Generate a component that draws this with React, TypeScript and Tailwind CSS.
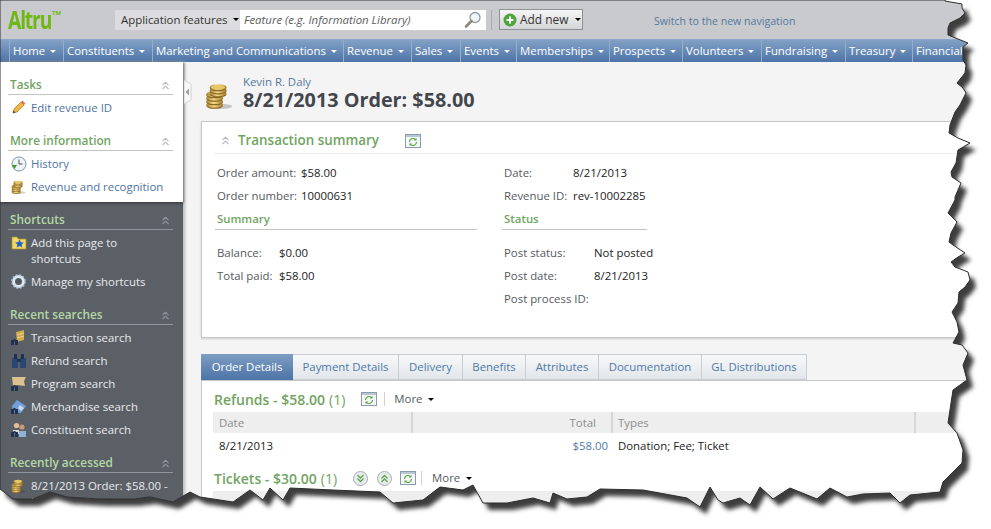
import { ChevronsUp } from "lucide-react";
import type { ReactNode } from "react";

const rightEdge =
  "945,1 962,4 962,8 965,13 960,18 950,23 948,28 948,35 968,43 963,47 963,60 966,65 965,73 957,83 963,88 966,93 960,105 955,112 950,125 949,133 958,138 970,143 958,150 956,163 951,172 952,177 961,183 955,197 955,200 948,213 957,222 951,233 949,242 953,245 965,253 958,257 951,262 955,267 968,272 970,280 965,287 959,292 958,303 952,312 957,322 959,332 953,343 962,345 968,353 963,365 967,380 953,390 948,423 957,433 963,450 962,463 943,482 940,492 910,495 900,503 890,493 863,494 847,497 830,488 817,499 790,488 773,499 760,487 750,505 740,498 723,503 718,500 710,487 700,507 687,498 665,494 643,490 600,489 587,497 567,499 553,493 550,503 533,498 507,503 483,503 473,485 463,490 440,487 423,500 393,503 380,492 333,490 290,488 283,500 270,488 263,500 250,490 233,502 200,497 190,492 173,502 150,497 133,499 100,499 67,497 50,492 33,499 13,499 0,489";

const tornPath = `M0 0 L945 0 L${rightEdge.split(" ").join(" L").replace(/,/g, " ")} Z`;

const navItems = [
  { label: "Home", w: "w-[54px]" },
  { label: "Constituents", w: "w-[89px]" },
  { label: "Marketing and Communications", w: "w-[191px]" },
  { label: "Revenue", w: "w-[68px]" },
  { label: "Sales", w: "w-[49px]" },
  { label: "Events", w: "w-[56px]" },
  { label: "Memberships", w: "w-[93px]" },
  { label: "Prospects", w: "w-[73px]" },
  { label: "Volunteers", w: "w-[79px]" },
  { label: "Fundraising", w: "w-[84px]" },
  { label: "Treasury", w: "w-[67px]" },
];

const tabs = [
  { label: "Payment Details", w: "w-[106px]" },
  { label: "Delivery", w: "w-[64px]" },
  { label: "Benefits", w: "w-[63px]" },
  { label: "Attributes", w: "w-[73px]" },
  { label: "Documentation", w: "w-[103px]" },
  { label: "GL Distributions", w: "w-[105px]" },
];

const stack = [
  { cx: 11, y: 27 },
  { cx: 11, y: 23 },
  { cx: 11, y: 19 },
  { cx: 11, y: 15 },
  { cx: 15, y: 14 },
  { cx: 15, y: 10.5 },
  { cx: 15, y: 7 },
];

const Coins = ({ size = 15 }: { size?: number }) => (
  <svg width={size} height={size} viewBox="0 0 32 32" className="shrink-0">
    <defs>
      <linearGradient id="gold" x1="0" x2="1" y1="0" y2="0">
        <stop offset="0" stopColor="#a9802c" />
        <stop offset=".45" stopColor="#f2dc8e" />
        <stop offset="1" stopColor="#a87c28" />
      </linearGradient>
    </defs>
    <ellipse cx="17" cy="29" rx="14" ry="3" fill="#00000030" />
    {stack.map((coin) => (
      <g key={`${coin.cx}-${coin.y}`}>
        <ellipse cx={coin.cx} cy={coin.y + 1.4} rx="9.5" ry="3.4" fill="#8f6a22" />
        <ellipse cx={coin.cx} cy={coin.y} rx="9.5" ry="3.4" fill="url(#gold)" />
      </g>
    ))}
    <ellipse cx="15" cy="7" rx="8" ry="2.6" fill="#e7c765" />
  </svg>
);

const Pencil = () => (
  <svg width="14" height="14" viewBox="0 0 14 14" className="shrink-0">
    <path d="M1 13l1-4 7-7 3 3-7 7z" fill="#f0b840" stroke="#a87420" strokeWidth=".7" />
    <path d="M9 2l1.4-1.4 3 3L12 5z" fill="#e0705a" />
    <path d="M1 13l.6-2.4 1.8 1.8z" fill="#444" />
  </svg>
);

const HistoryIcon = () => (
  <svg width="16" height="16" viewBox="0 0 16 16" className="shrink-0">
    <circle cx="8" cy="8" r="7" fill="#eef3f6" stroke="#7f98a8" />
    <path d="M8 3.5V8h3.5" fill="none" stroke="#555" strokeWidth="1" />
    <path d="M1 9h5l-2.5 4z" fill="#3e9a2c" />
  </svg>
);

const FolderStar = () => (
  <svg width="16" height="15" viewBox="0 0 16 15" className="shrink-0">
    <path d="M1 2h5l1.5 2H15v10H1z" fill="#f2d667" stroke="#a9902f" strokeWidth=".7" />
    <path d="M8.5 4.5l1.3 2.8 3 .3-2.2 2 .7 3-2.8-1.6-2.8 1.6.7-3-2.2-2 3-.3z" fill="#1f63c4" />
  </svg>
);

const Gear = () => (
  <svg width="15" height="15" viewBox="0 0 15 15" className="shrink-0">
    <circle cx="7.5" cy="7.5" r="5" fill="none" stroke="#dde6ee" strokeWidth="3" />
    <circle cx="7.5" cy="7.5" r="6.6" fill="none" stroke="#a8c0d6" strokeWidth="1.6" strokeDasharray="2 1.5" />
    <circle cx="7.5" cy="7.5" r="2.4" fill="#4f5660" />
  </svg>
);

const Binoculars = () => (
  <g>
    <rect x="0" y="10" width="3" height="5" fill="#22334f" />
    <rect x="4" y="10" width="3" height="5" fill="#22334f" />
    <rect x="2.5" y="9" width="2" height="2.5" fill="#22334f" />
  </g>
);

const SearchCoin = () => (
  <svg width="15" height="16" viewBox="0 0 15 16" className="shrink-0">
    <path d="M5 2l8-2v10l-7 2z" fill="#cfa84f" />
    <path d="M6 5l7-2M6 8l7-2" stroke="#f2df9c" strokeWidth=".8" />
    <Binoculars />
  </svg>
);

const RefundBinoculars = () => (
  <svg width="16" height="15" viewBox="0 0 16 15" className="shrink-0">
    <rect x="1" y="5" width="6" height="10" rx="1" fill="#2a4672" />
    <rect x="9" y="5" width="6" height="10" rx="1" fill="#2a4672" />
    <rect x="3" y="1" width="3" height="5" fill="#1d3153" />
    <rect x="10" y="1" width="3" height="5" fill="#1d3153" />
    <rect x="6" y="6" width="4" height="3" fill="#1d3153" />
  </svg>
);

const SearchTicket = () => (
  <svg width="16" height="16" viewBox="0 0 16 16" className="shrink-0">
    <path d="M1 1h14l-2 4 1 5-8-1-4 1z" fill="#dcc08e" />
    <Binoculars />
  </svg>
);

const SearchTag = () => (
  <svg width="16" height="16" viewBox="0 0 16 16" className="shrink-0">
    <path d="M6 1l9 6-5 7-8-1-1-6z" fill="#6f9fdc" />
    <path d="M9 6l4 3-3 3-3-3z" fill="#cfd6de" />
    <Binoculars />
  </svg>
);

const SearchPeople = () => (
  <svg width="16" height="16" viewBox="0 0 16 16" className="shrink-0">
    <circle cx="5.5" cy="3.5" r="2.6" fill="#e3bf98" />
    <circle cx="11" cy="5" r="2.6" fill="#c99a74" />
    <path d="M2 8h6v4H2z" fill="#d9d4cc" />
    <path d="M8 9h7v6H8z" fill="#8fb1d6" />
    <Binoculars />
  </svg>
);

const RefreshBox = () => (
  <svg width="16" height="14" viewBox="0 0 16 14" className="shrink-0">
    <rect x=".5" y=".5" width="15" height="13" fill="#f6f8f9" stroke="#8a9bb0" />
    <rect x="1" y="1" width="14" height="2" fill="#b9c6d4" />
    <path d="M4.5 8a3.5 3.5 0 0 1 6-2.4M11.5 8a3.5 3.5 0 0 1-6 2.4" fill="none" stroke="#55a83c" strokeWidth="1.2" />
    <path d="M11.5 3.8v2.7H8.8zM4.5 12.2V9.5h2.7z" fill="#55a83c" />
  </svg>
);

const RoundChevrons = ({ up }: { up?: boolean }) => (
  <svg width="15" height="15" viewBox="0 0 15 15" className="shrink-0">
    <circle cx="7.5" cy="7.5" r="7" fill="#e8ecef" stroke="#a5adb5" />
    <path
      d={up ? "M4.5 7.5l3-3 3 3M4.5 11l3-3 3 3" : "M4.5 4l3 3 3-3M4.5 7.5l3 3 3-3"}
      fill="none"
      stroke="#5da544"
      strokeWidth="1.3"
    />
  </svg>
);

const Caret = ({ className }: { className: string }) => (
  <span className={`inline-block w-0 h-0 border-x-[3px] border-x-transparent border-t-[3px] ${className}`} />
);

const SideHeading = ({ title, dark, className }: { title: string; dark?: boolean; className?: string }) => (
  <div className={`flex items-center justify-between h-[19px] ml-2 mr-[10px] pl-0.5 border-b ${dark ? "border-[#8c949c]" : "border-[#c4c4c4]"} ${className ?? ""}`}>
    <span className={`text-[11.8px] font-semibold leading-none ${dark ? "text-[#b4d8a4]" : "text-[#6fa45f]"}`}>{title}</span>
    <ChevronsUp size={13} className={`mr-px ${dark ? "text-[#8c959d]" : "text-[#bcbcbc]"}`} />
  </div>
);

const SideLink = ({ icon, dark, children }: { icon: ReactNode; dark?: boolean; children: ReactNode }) => (
  <div className={`flex gap-[5px] pl-[11px] pr-1 py-[3.5px] leading-4 ${dark ? "text-[#e8eaec]" : "text-[#4e73a0]"}`}>
    <span className="w-[15px] h-4 flex justify-center">{icon}</span>
    <span>{children}</span>
  </div>
);

const Field = ({ label, value, w }: { label: string; value?: string; w: string }) => (
  <div className="flex h-[23px] items-center">
    <span className={`${w} text-[#555a60]`}>{label}</span>
    <span className="text-[#222]">{value}</span>
  </div>
);

export default function App() {
  return (
    <div
      className="relative w-[991px] h-[529px] overflow-hidden bg-[#f4f4f4] text-[11.4px]"
      style={{ fontFamily: '"Open Sans", sans-serif' }}
    >
      {/* Top bar */}
      <header className="flex items-center h-[39px] bg-[#c9cacd] pl-2">
        <div className="w-[107px] flex items-start text-[#6fb712]">
          <span className="text-[25px] font-bold leading-none tracking-[-1.5px] scale-x-[.77] origin-left">Altru</span>
          <span className="text-[6px] font-bold -ml-[12px] mt-0.5">TM</span>
        </div>
        <div className="flex items-center h-5 w-[125px] bg-[#dcdcde] pl-[6px] gap-[5px] text-[#333] whitespace-nowrap">
          <span>Application features</span>
          <Caret className="border-t-black" />
        </div>
        <div className="flex items-center justify-between h-5 w-[246px] bg-white pl-1 pr-1 italic text-[#5c5c5c]">
          <span>Feature (e.g. Information Library)</span>
          <svg width="18" height="18" viewBox="0 0 18 18">
            <circle cx="11" cy="6.5" r="5" fill="#f2f6f9" stroke="#8d9aa3" strokeWidth="1.3" />
            <path d="M7.5 10L2 15.5" stroke="#8e8678" strokeWidth="2.6" strokeLinecap="round" />
          </svg>
        </div>
        <div className="w-px h-5 bg-[#a9abae] ml-[5px] mr-[7px]" />
        <button className="flex items-center h-[21px] w-[84px] border border-[#8f9194] bg-gradient-to-b from-[#f6f6f6] to-[#d4d5d7] pl-[3px] gap-[3px] text-[#333] text-[11.9px]">
          <svg width="14" height="14" viewBox="0 0 14 14">
            <circle cx="7" cy="7" r="6.5" fill="#4fa33b" />
            <path d="M7 3.5v7M3.5 7h7" stroke="#fff" strokeWidth="2" />
          </svg>
          <span>Add new</span>
          <Caret className="border-t-black ml-1" />
        </button>
        <span className="ml-[71px] pt-1 text-[#55799f] text-[10.6px]">Switch to the new navigation</span>
      </header>

      {/* Nav */}
      <nav className="flex items-center h-[23px] pl-[9px] bg-gradient-to-b from-[#83a1c5] to-[#4d74a7] border-t border-[#8aa6c8] text-white whitespace-nowrap">
        {navItems.map((item) => (
          <div key={item.label} className={`${item.w} h-full flex items-center gap-[5px] pl-[3px] border-l border-[#94aecb]`}>
            <span>{item.label}</span>
            <Caret className="border-t-white" />
          </div>
        ))}
        <div className="h-full flex items-center pl-[3px] border-l border-[#94aecb]">Financial</div>
      </nav>

      <div className="flex h-[467px]">
        {/* Sidebar */}
        <aside className="w-[183px] shrink-0 flex flex-col bg-[#5b6067] shadow-[2px_0_3px_#bbb]">
          <div className="bg-white h-[140px] pt-[14px] shadow-[0_1px_3px_#333]">
            <SideHeading title="Tasks" />
            <div className="pt-px">
              <SideLink icon={<Pencil />}>Edit revenue ID</SideLink>
            </div>
            <SideHeading title="More information" className="mt-[13px]" />
            <div className="pt-px">
              <SideLink icon={<HistoryIcon />}>History</SideLink>
              <SideLink icon={<Coins />}>Revenue and recognition</SideLink>
            </div>
          </div>
          <div className="pt-[9px]">
            <SideHeading title="Shortcuts" dark />
            <div className="pt-px">
              <SideLink dark icon={<FolderStar />}>Add this page to<br />shortcuts</SideLink>
              <SideLink dark icon={<Gear />}>Manage my shortcuts</SideLink>
            </div>
            <SideHeading title="Recent searches" dark className="mt-[13px]" />
            <div className="pt-px">
              <SideLink dark icon={<SearchCoin />}>Transaction search</SideLink>
              <SideLink dark icon={<RefundBinoculars />}>Refund search</SideLink>
              <SideLink dark icon={<SearchTicket />}>Program search</SideLink>
              <SideLink dark icon={<SearchTag />}>Merchandise search</SideLink>
              <SideLink dark icon={<SearchPeople />}>Constituent search</SideLink>
            </div>
            <SideHeading title="Recently accessed" dark className="mt-[13px]" />
            <div className="pt-px">
              <SideLink dark icon={<Coins />}>8/21/2013 Order: $58.00 - Kevin R. Daly</SideLink>
            </div>
          </div>
        </aside>

        {/* Main */}
        <main className="relative flex-1 pl-[18px] min-w-0">
          {/* Collapse handle on the sidebar edge */}
          <svg width="8" height="24" viewBox="0 0 8 24" className="absolute left-px top-[18px]">
            <path d="M0 0l7 4v16l-7 4z" fill="#f8f8f8" stroke="#d0d0d0" />
            <path d="M5 8.5v7L1.5 12z" fill="#9a9fa5" />
          </svg>

          <div className="flex items-center h-[59px] pl-[4px] gap-[10px]">
            <span className="mt-[7px]"><Coins size={28} /></span>
            <div className="pt-[3px]">
              <div className="text-[#55799f] leading-[14px]">Kevin R. Daly</div>
              <div className="text-[19.8px] font-bold leading-[22px] text-[#43474d]">8/21/2013 Order: $58.00</div>
            </div>
          </div>

          <section className="h-[217px] w-[800px] bg-white border border-[#c8c8c8] shadow-[0_1px_2px_#ccc]">
            <div className="flex items-center h-[32px] pt-[6px] ml-[12px] border-b border-[#ececec]">
              <ChevronsUp size={13} className="text-[#b9b9b9] ml-[5px]" />
              <span className="ml-[6px] w-[167px] text-[13.4px] font-semibold text-[#6fa45f]">Transaction summary</span>
              <RefreshBox />
            </div>
            <div className="flex pl-[15px] pt-[7px]">
              <div className="w-[260px]">
                <Field label="Order amount:" value="$58.00" w="w-[84px]" />
                <Field label="Order number:" value="10000631" w="w-[84px]" />
                <div className="h-[23px] w-[262px] -ml-[2px] pl-[2px] border-b border-[#c4c4c4] font-semibold text-[#6fa45f] leading-[24px]">Summary</div>
                <div className="mt-[11px]">
                  <Field label="Balance:" value="$0.00" w="w-[62px]" />
                  <Field label="Total paid:" value="$58.00" w="w-[62px]" />
                </div>
              </div>
              <div className="ml-[27px] w-[200px]">
                <Field label="Date:" value="8/21/2013" w="w-[69px]" />
                <Field label="Revenue ID:" value="rev-10002285" w="w-[69px]" />
                <div className="h-[23px] w-[145px] -ml-[2px] pl-[2px] border-b border-[#c4c4c4] font-semibold text-[#6fa45f] leading-[24px]">Status</div>
                <div className="mt-[11px]">
                  <Field label="Post status:" value="Not posted" w="w-[90px]" />
                  <Field label="Post date:" value="8/21/2013" w="w-[90px]" />
                  <Field label="Post process ID:" w="w-[90px]" />
                </div>
              </div>
            </div>
          </section>

          {/* Tabs */}
          <div className="flex h-[26px] mt-[16px] whitespace-nowrap">
            <div className="w-[92px] flex items-center justify-center bg-gradient-to-b from-[#7d9dc3] to-[#4d74a7] text-white">Order Details</div>
            {tabs.map((tab) => (
              <div key={tab.label} className={`${tab.w} flex items-center justify-center bg-gradient-to-b from-[#f7f8f9] to-[#e2e6ea] border border-l-0 border-[#c9cdd1] text-[#4f79a8]`}>
                {tab.label}
              </div>
            ))}
          </div>

          <section className="w-[800px] h-[140px] bg-white border-l border-t border-[#c8c8c8] pl-[11px]">
            <div className="flex items-center h-[32px] pt-[4px] pl-px">
              <span className="text-[14px] font-semibold text-[#6fa45f]">Refunds - $58.00</span>
              <span className="ml-1 text-[14px] text-[#6fa45f]">(1)</span>
              <span className="ml-4"><RefreshBox /></span>
              <span className="w-px h-3.5 bg-[#d0d0d0] ml-[7px]" />
              <span className="ml-[9px] text-[#555a60]">More</span>
              <Caret className="border-t-black ml-[6px]" />
            </div>
            <div className="flex h-[21px] w-[800px] bg-[#eeeeee] text-[#8c8c8c] -mt-[1px]">
              <div className="w-[200px] pl-[6px] leading-[21px] border-r-2 border-[#d6d6d6]">Date</div>
              <div className="w-[200px] pr-[15px] text-right leading-[21px] border-r-2 border-[#d6d6d6]">Total</div>
              <div className="w-[303px] pl-[5px] leading-[21px] border-r-2 border-[#d6d6d6]">Types</div>
            </div>
            <div className="flex h-[26px] items-center text-[#222]">
              <div className="w-[200px] pl-[6px]">8/21/2013</div>
              <div className="w-[200px] pr-[5px] text-right text-[#4f79a8]">$58.00</div>
              <div className="pl-[5px]">Donation; Fee; Ticket</div>
            </div>
            <div className="flex items-center h-[32px] pt-[6px] pl-px">
              <span className="text-[14px] font-semibold text-[#6fa45f]">Tickets - $30.00</span>
              <span className="ml-1 text-[14px] text-[#6fa45f]">(1)</span>
              <span className="ml-[16px]"><RoundChevrons /></span>
              <span className="ml-[9px]"><RoundChevrons up /></span>
              <span className="ml-[8px]"><RefreshBox /></span>
              <span className="w-px h-3.5 bg-[#d0d0d0] ml-[5px]" />
              <span className="ml-[10px] text-[#555a60]">More</span>
              <Caret className="border-t-black ml-[6px]" />
            </div>
            <div className="h-[21px] w-[800px] bg-[#eeeeee]" />
          </section>
        </main>
      </div>

      {/* Torn screenshot edge */}
      <svg width="991" height="529" viewBox="0 0 991 529" className="absolute inset-0 pointer-events-none">
        <defs>
          <filter id="tornBlur" x="-5%" y="-5%" width="110%" height="110%">
            <feGaussianBlur stdDeviation="2" />
          </filter>
          <clipPath id="outside">
            <path clipRule="evenodd" d={`M0 0H991V529H0Z ${tornPath}`} />
          </clipPath>
        </defs>
        <path fillRule="evenodd" fill="#ffffff" d={`M0 0H991V529H0Z ${tornPath}`} />
        <g clipPath="url(#outside)">
          <path d={tornPath} fill="#3c3c3c" transform="translate(6 7)" filter="url(#tornBlur)" />
        </g>
        <path d={tornPath} fill="none" stroke="#2e2e2e" strokeWidth="1" />
      </svg>
    </div>
  );
}
